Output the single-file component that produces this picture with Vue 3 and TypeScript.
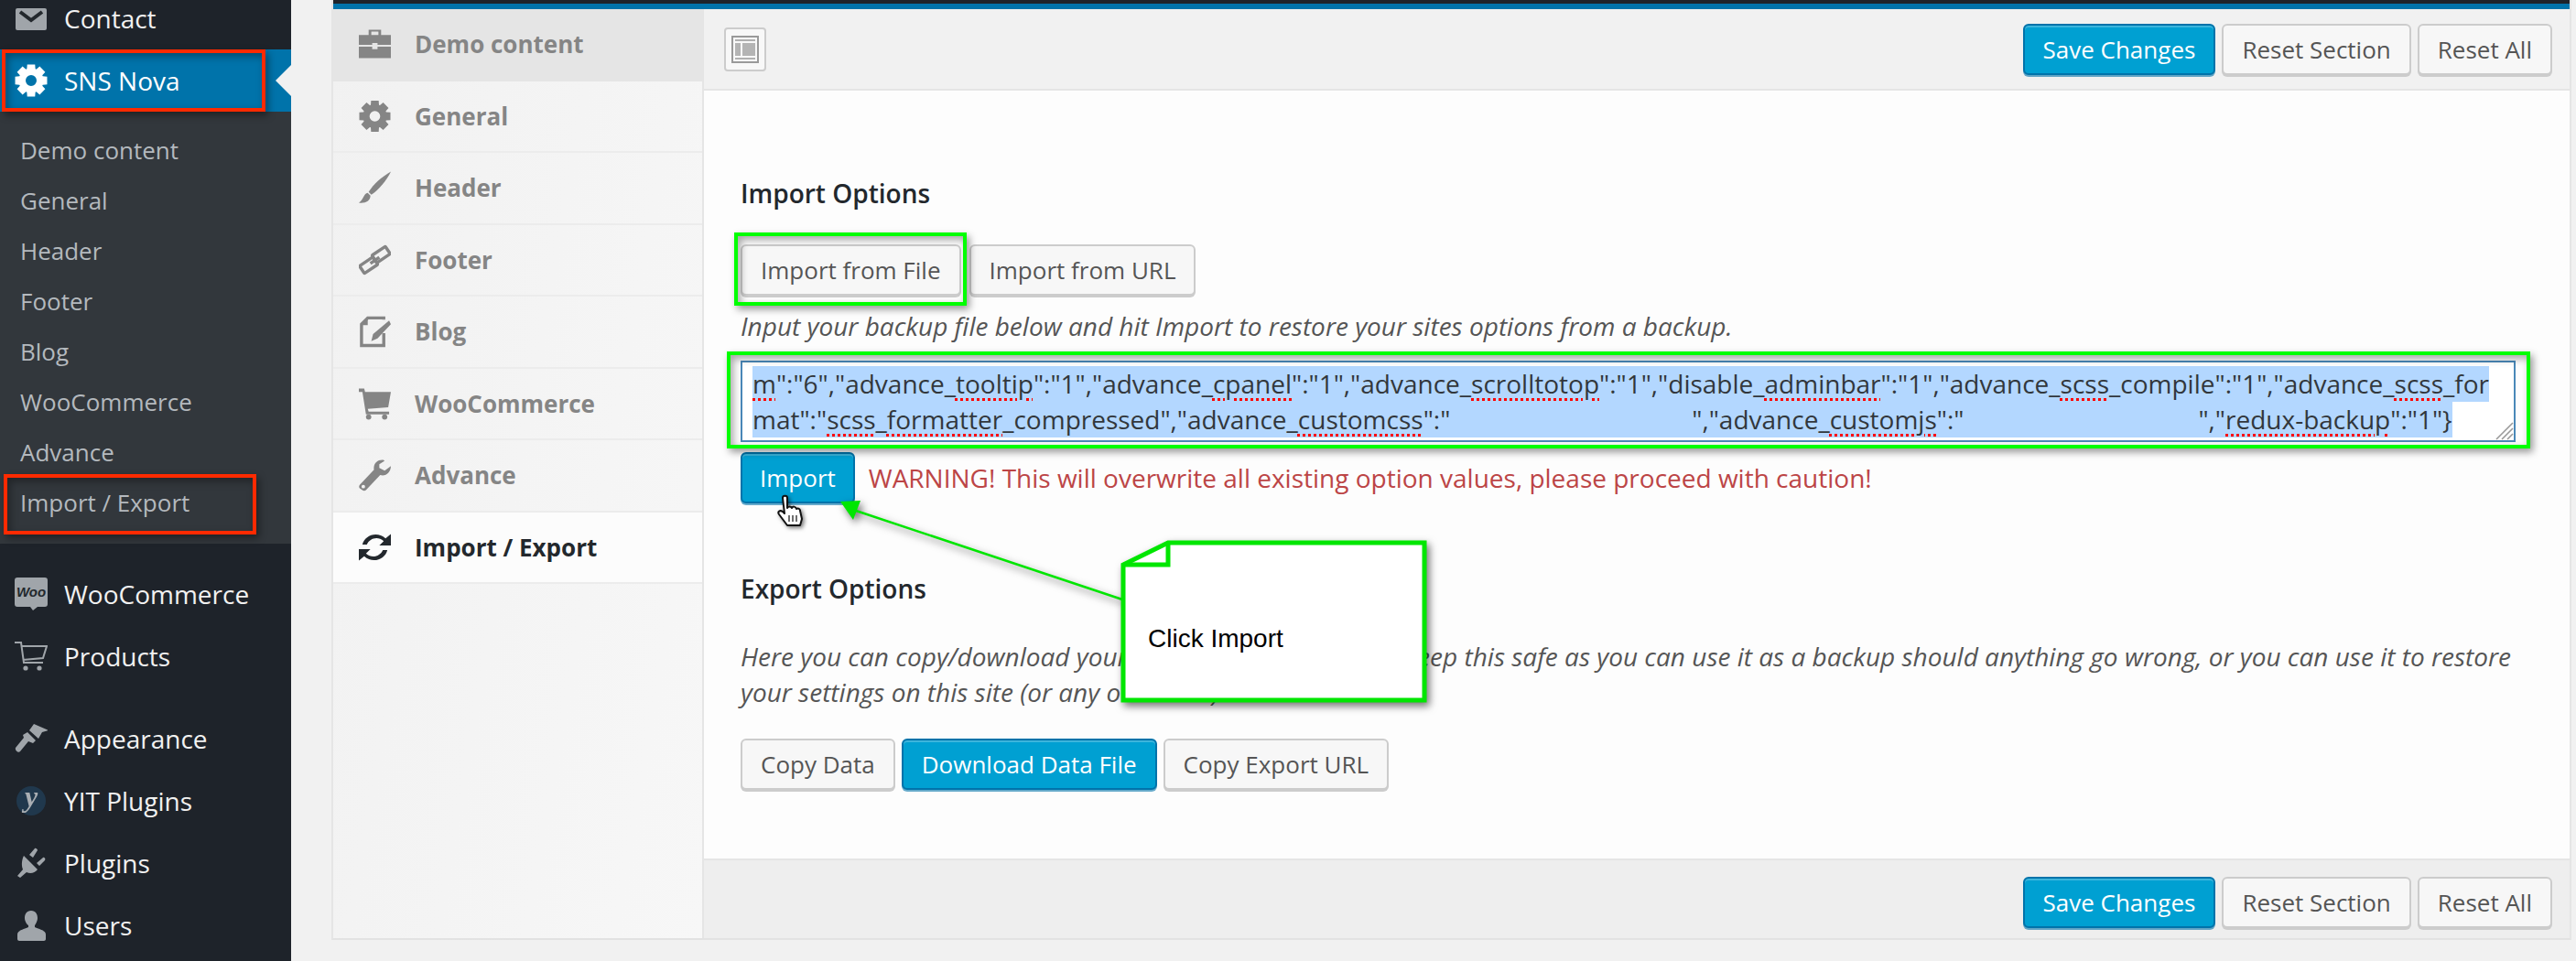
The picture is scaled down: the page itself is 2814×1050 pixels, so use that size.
<script setup lang="ts">
function gear(cx: number, cy: number, ro: number, ri: number, hole: number): string {
  let d = ''
  const n = 8
  for (let i = 0; i < n; i++) {
    const a = (i * 2 * Math.PI) / n
    const w = 0.24
    const pts = [
      [ri, a - 0.35],
      [ro, a - w],
      [ro, a + w],
      [ri, a + 0.35],
    ]
    for (const [r, t] of pts) {
      d += (d ? 'L' : 'M') + (cx + r * Math.cos(t)).toFixed(2) + ' ' + (cy + r * Math.sin(t)).toFixed(2)
    }
  }
  d += `ZM${cx - hole} ${cy}a${hole} ${hole} 0 1 0 ${hole * 2} 0a${hole} ${hole} 0 1 0 ${-hole * 2} 0Z`
  return d
}

const gearPath = gear(18, 18, 18, 13.5, 6)

const subItems: string[] = ['Demo content', 'General', 'Header', 'Footer', 'Blog', 'WooCommerce', 'Advance', 'Import / Export']

interface NavItem { label: string; icon: string }
const navItems: NavItem[] = [
  { label: 'Demo content', icon: 'brief' },
  { label: 'General', icon: 'gear' },
  { label: 'Header', icon: 'brush' },
  { label: 'Footer', icon: 'link' },
  { label: 'Blog', icon: 'edit' },
  { label: 'WooCommerce', icon: 'cart' },
  { label: 'Advance', icon: 'wrench' },
  { label: 'Import / Export', icon: 'refresh' },
]
</script>

<template>
  <div class="page">
    <aside class="side">
      <div class="row first">
        <svg class="ic" viewBox="0 0 36 36"><path fill="#a0a5aa" d="M3 7h30a2 2 0 0 1 2 2v20a2 2 0 0 1-2 2H3a2 2 0 0 1-2-2V9a2 2 0 0 1 2-2z" /><path fill="none" stroke="#23282d" stroke-width="4" d="M6 11l12 9 12-9" /></svg>
        <span>Contact</span>
      </div>
      <div class="row current">
        <svg class="ic" viewBox="0 0 36 36"><path fill="#fff" fill-rule="evenodd" :d="gearPath" /></svg>
        <span>SNS Nova</span>
        <i class="notch"></i>
      </div>
      <div class="sub">
        <div v-for="s in subItems" :key="s" class="subitem">{{ s }}</div>
      </div>
      <div class="row woo">
        <svg class="ic" viewBox="0 0 36 36"><path fill="#a0a5aa" d="M3 0h30a3 3 0 0 1 3 3v26a3 3 0 0 1-3 3H25l-5 4-3-4H3a3 3 0 0 1-3-3V3a3 3 0 0 1 3-3z" /><text x="18" y="21" text-anchor="middle" class="wootext">Woo</text></svg>
        <span>WooCommerce</span>
      </div>
      <div class="row">
        <svg class="ic" viewBox="0 0 36 36"><path fill="none" stroke="#a0a5aa" stroke-width="2" d="M0 3h7l3 22h21M8 7h27l-4 13-22 2" /><circle cx="12" cy="31" r="2.6" fill="#a0a5aa" /><circle cx="27" cy="31" r="2.6" fill="#a0a5aa" /></svg>
        <span>Products</span>
      </div>
      <div class="row gapped">
        <svg class="ic" viewBox="0 0 36 36"><path fill="#a0a5aa" d="M21 2l16 7-7 2-4 7-10-9zM14 11l9 9-3 3-5-2L6 32c-2 2-6-1-5-4l9-11-1-3z" /></svg>
        <span>Appearance</span>
      </div>
      <div class="row">
        <svg class="ic yit" viewBox="0 0 36 36"><circle cx="18" cy="18" r="16" fill="#20384d" /><text x="18" y="24" text-anchor="middle" class="ytext">y</text></svg>
        <span>YIT Plugins</span>
      </div>
      <div class="row">
        <svg class="ic" viewBox="0 0 36 36"><path fill="#a0a5aa" d="M10 10l15 15c-3 4-8 5-12 3l-7 6-3-2 6-7c-2-5-1-11 1-15zM16 9l6-7c1-1 3 1 3 2l-5 8zM24 18l7-6c2-1 3 2 2 3l-6 6z" /></svg>
        <span>Plugins</span>
      </div>
      <div class="row">
        <svg class="ic" viewBox="0 0 36 36"><path fill="#a0a5aa" d="M18 2c5 0 7 4 7 8 0 3-2 7-3 8v2c3 2 12 3 12 8v5c0 1-1 2-2 2H5c-1 0-2-1-2-2v-5c0-5 9-6 12-8v-2c-2-1-4-5-4-8 0-4 2-8 7-8z" /></svg>
        <span>Users</span>
      </div>
    </aside>

    <section class="panel">
      <div class="stripe"></div>
      <div class="body">
        <nav class="tabs">
          <div v-for="n in navItems" :key="n.label" class="tab" :class="{ first: n.icon === 'brief', active: n.icon === 'refresh' }">
            <svg class="tabic" viewBox="0 0 36 36">
              <g v-if="n.icon === 'brief'" fill="currentColor"><path fill-rule="evenodd" d="M11 2h14v6h11v11H21v-2h-6v2H0V8h11zM14 4v4h8V4z" /><path d="M0 21h15v3h6v-3h15v13H0z" /></g>
              <path v-else-if="n.icon === 'gear'" fill="currentColor" fill-rule="evenodd" :d="gearPath" />
              <g v-else-if="n.icon === 'brush'" fill="currentColor"><path d="M36 0C26 6 16 14 11 23l3 3C23 20 31 10 36 0z" /><path d="M10 24c-5 1-4 7-10 11 7 1 13-2 13-8z" /></g>
              <g v-else-if="n.icon === 'link'" fill="none" stroke="currentColor" stroke-width="3.5"><rect x="2" y="19" width="18" height="10" rx="1" transform="rotate(-34 11 24)" /><rect x="16" y="7" width="18" height="10" rx="1" transform="rotate(-34 25 12)" /><path d="M13 22l10-7" /></g>
              <g v-else-if="n.icon === 'edit'" fill="currentColor"><path fill="none" stroke="currentColor" stroke-width="3.5" d="M28 20v14H3V10l7-7h18v2" /><path d="M10 3v8H3zM34 6l2 4-15 16-7 3 2-8z" /></g>
              <g v-else-if="n.icon === 'cart'" fill="currentColor"><path d="M0 1h6l1 4h29l-3 17-23 2 1 3h23v3H8L4 5H0z" /><circle cx="11" cy="33" r="3" /><circle cx="29" cy="33" r="3" /></g>
              <path v-else-if="n.icon === 'wrench'" fill="currentColor" fill-rule="evenodd" d="M26 1c-6 0-10 5-9 11L1 29c-1 1-1 3 0 4l3 2c1 1 3 1 4 0l16-17c6 2 12-3 12-10l-7 5-6-3V6l6-4c-1-1-2-1-3-1zM5 29a2 2 0 1 0 0 4 2 2 0 0 0 0-4z" />
              <g v-else fill="currentColor"><path d="M4 15C6 5 20-1 30 8l6-5v13H23l5-5C21 5 12 8 9 15zM32 21C30 31 16 37 6 28l-6 5V20h13l-5 5c7 6 16 3 19-4z" /></g>
            </svg>
            <span>{{ n.label }}</span>
          </div>
        </nav>

        <main class="main">
          <header class="bar top">
            <div class="layout">
              <svg viewBox="0 0 30 30" class="layicon">
                <rect x="1" y="1" width="28" height="28" fill="none" stroke="#9a9a9a" stroke-width="2" />
                <path stroke="#b0b0b0" stroke-width="2" d="M4 5h22M4 25h22" />
                <path fill="#b4b4b4" d="M4 8h6v14H4zM12 8h14v14H12z" />
              </svg>
            </div>
            <div class="actions">
              <button class="btn primary">Save Changes</button>
              <button class="btn">Reset Section</button>
              <button class="btn">Reset All</button>
            </div>
          </header>

          <div class="content">
            <h3 class="title imp">Import Options</h3>
            <div class="btns b1">
              <button class="btn">Import from File</button>
              <button class="btn">Import from URL</button>
            </div>
            <p class="desc d1">Input your backup file below and hit Import to restore your sites options from a backup.</p>
            <div class="area">
              <div class="line"><span class="sel"><u>m</u>":"6","advance_<u>tooltip</u>":"1","advance_<u>cpanel</u>":"1","advance_<u>scrolltotop</u>":"1","disable_<u>adminbar</u>":"1","advance_<u>scss</u>_compile":"1","advance_<u>scss</u>_for</span></div>
              <div class="line"><span class="sel">mat":"<u>scss</u>_<u>formatter</u>_compressed","advance_<u>customcss</u>":"<i class="g1"></i>","advance_<u>customjs</u>":"<i class="g2"></i>","<u>redux-backup</u>":"1"}</span></div>
              <svg class="grip" viewBox="0 0 20 20"><path stroke="#999" stroke-width="1.6" d="M1 19L19 1M7 19L19 7M13 19l6-6" /></svg>
            </div>
            <div class="imprun">
              <button class="btn primary small">Import</button>
              <span class="warn">WARNING! This will overwrite all existing option values, please proceed with caution!</span>
            </div>
            <h3 class="title exp">Export Options</h3>
            <p class="desc d2">Here you can copy/download your current option settings. Keep this safe as you can use it as a backup should anything go wrong, or you can use it to restore your settings on this site (or any other site).</p>
            <div class="btns b2">
              <button class="btn">Copy Data</button>
              <button class="btn primary">Download Data File</button>
              <button class="btn">Copy Export URL</button>
            </div>
          </div>

          <footer class="bar bottom">
            <div class="actions">
              <button class="btn primary">Save Changes</button>
              <button class="btn">Reset Section</button>
              <button class="btn">Reset All</button>
            </div>
          </footer>
        </main>
      </div>
    </section>

    <div class="mark red r1"></div>
    <div class="mark red r2"></div>
    <div class="mark green g-file"></div>
    <div class="mark green g-area"></div>

    <svg class="annot" viewBox="0 0 2814 1050">
      <g class="shadowed">
        <polyline points="1226,655 932,557" fill="none" stroke="#00e600" stroke-width="2.5" />
        <polygon points="918,548 940,547 932,568" fill="#00e600" />
      </g>
      <g class="shadowed">
        <polygon points="1276,593 1556,593 1556,765 1227,765 1227,617" fill="#fff" stroke="#00e600" stroke-width="5" />
        <polyline points="1276,593 1276,617 1227,617" fill="none" stroke="#00e600" stroke-width="5" />
      </g>
      <text x="1254" y="707" class="note">Click Import</text>
      <g class="cursor" transform="translate(849 541)">
        <path fill="#fff" stroke="#111" stroke-width="2" stroke-linejoin="round" d="M6 3c0-3 5-3 5 0v11c1-2 4-2 5 0 1-2 4-2 5 1 2-1 4 0 4 2l2 9-2 7H11L2 21c-2-3 1-5 4-3l2 2z" />
        <path stroke="#333" stroke-width="1.4" d="M13 22v7M17 22v7M21 22v7" />
      </g>
    </svg>
  </div>
</template>

<style scoped>
.page {
  position: relative;
  display: flex;
  width: 2814px;
  height: 1050px;
  overflow: hidden;
  background: #f1f1f1;
  font-family: "Open Sans", "Liberation Sans", sans-serif;
  font-size: 28px;
  color: #444;
}
.side {
  flex: none;
  width: 318px;
  background: #1e232a;
  color: #f1f1f1;
}
.row {
  position: relative;
  display: flex;
  align-items: center;
  height: 68px;
  padding-left: 16px;
  box-sizing: border-box;
}
.row .ic {
  flex: none;
  width: 36px;
  height: 36px;
  margin-right: 18px;
}
.row.first {
  height: 54px;
  padding-bottom: 14px;
}
.row.current {
  background: #0073aa;
  color: #fff;
}
.notch {
  position: absolute;
  right: 0;
  top: 17px;
  border: 17px solid transparent;
  border-right-color: #f1f1f1;
  border-left-width: 0;
}
.sub {
  background: #32373c;
  padding: 15px 0 17px;
  color: #b4b9be;
  font-size: 26px;
}
.subitem {
  height: 55px;
  line-height: 55px;
  padding-left: 22px;
}
.row.woo {
  margin-top: 21px;
}
.row.gapped {
  margin-top: 22px;
}
.wootext {
  font-family: "Liberation Sans", sans-serif;
  font-size: 15px;
  font-weight: 700;
  font-style: italic;
  fill: #23282d;
}
.ytext {
  font-family: "Liberation Serif", serif;
  font-size: 32px;
  font-weight: 700;
  font-style: italic;
  fill: #a9aeb3;
}
.yit {
  overflow: visible;
  filter: blur(0.6px);
}

.panel {
  flex: none;
  display: flex;
  flex-direction: column;
  width: 2447px;
  height: 1027px;
  margin-left: 44px;
  box-sizing: border-box;
  background: #f4f4f4;
  border-left: 2px solid #e5e5e5;
  border-right: 2px solid #e5e5e5;
  border-bottom: 2px solid #e2e2e2;
}
.stripe {
  flex: none;
  height: 10px;
  box-sizing: border-box;
  background: #0073aa;
  border-top: 4px solid #1e232a;
}
.body {
  flex: 1;
  display: flex;
  min-height: 0;
}
.tabs {
  flex: none;
  width: 403px;
  background: linear-gradient(100deg, #f1f1f1, #f7f7f7);
  border-right: 2px solid #e5e5e5;
  font-size: 26px;
}
.tab {
  display: flex;
  align-items: center;
  height: 78.5px;
  box-sizing: border-box;
  padding-left: 28px;
  border-bottom: 2px solid #ececec;
  font-weight: 700;
  color: #858585;
}
.tab.first {
  background: #e5e5e5;
  border-bottom-color: #e5e5e5;
}
.tab.active {
  background: #fcfcfc;
  color: #23282d;
}
.tabic {
  flex: none;
  width: 35px;
  height: 36px;
  margin-right: 26px;
}
.main {
  flex: 1;
  display: flex;
  flex-direction: column;
  min-width: 0;
  background: #fdfdfd;
}
.bar {
  flex: none;
  display: flex;
  align-items: center;
  box-sizing: border-box;
  background: #f1f1f1;
}
.bar.top {
  height: 89px;
  padding: 16px 19px 0 22px;
  align-items: flex-start;
  border-bottom: 2px solid #e5e5e5;
}
.bar.bottom {
  margin-top: auto;
  height: 87px;
  padding: 18px 19px 0 22px;
  align-items: flex-start;
  border-top: 2px solid #e5e5e5;
  background: #eee;
}
.actions {
  display: flex;
  gap: 7px;
  margin-left: auto;
}
.layout {
  display: flex;
  align-items: center;
  justify-content: center;
  width: 46px;
  height: 48px;
  margin-top: 4px;
  box-sizing: border-box;
  border: 2px solid #ccc;
  border-radius: 4px;
  background: #f8f8f8;
}
.layicon {
  width: 30px;
  height: 30px;
}
.btn {
  flex: none;
  height: 56px;
  box-sizing: border-box;
  padding: 0 20px;
  font-family: inherit;
  font-size: 26px;
  color: #555;
  background: #f7f7f7;
  border: 2px solid #ccc;
  border-radius: 6px;
  box-shadow: 0 2px 0 #ccc;
  margin: 0;
  white-space: nowrap;
}
.btn.primary {
  color: #fff;
  background: #00a0d2;
  border-color: #0073aa;
  box-shadow: inset 0 2px 0 rgba(120, 200, 230, 0.5), 0 2px 0 rgba(0, 115, 170, 0.6);
}
.btn.small {
  padding: 0 19px;
}
.content {
  padding-left: 40px;
}
.title {
  margin: 0;
  font-size: 28px;
  line-height: 36px;
  font-weight: 600;
  color: #23282d;
}
.imp {
  margin-top: 94px;
}
.exp {
  margin-top: 75px;
}
.btns {
  display: flex;
}
.b1 {
  margin-top: 38px;
  gap: 9px;
}
.b2 {
  margin-top: 31px;
  gap: 7px;
}
.desc {
  margin: 0;
  font-style: italic;
  line-height: 39px;
  color: #555;
}
.d1 {
  margin-top: 14px;
}
.d2 {
  margin-top: 37px;
  width: 1960px;
}
.area {
  position: relative;
  width: 1939px;
  height: 89px;
  margin-top: 18px;
  box-sizing: border-box;
  background: #fff;
  border: 2px solid #4a88b8;
  padding: 4px 0 0 11px;
  color: #32373c;
  overflow: hidden;
}
.line {
  height: 39px;
  line-height: 39px;
  white-space: nowrap;
}
.sel {
  display: inline-block;
  background: #b3d7ff;
}
.sel u {
  text-decoration: underline dotted #f00 3px;
  text-underline-offset: 5px;
}
.g1 {
  display: inline-block;
  width: 264px;
}
.g2 {
  display: inline-block;
  width: 256px;
}
.grip {
  position: absolute;
  right: 0;
  bottom: 0;
  width: 20px;
  height: 20px;
}
.imprun {
  display: flex;
  align-items: center;
  margin-top: 11px;
}
.warn {
  margin-left: 15px;
  color: #bc4546;
}
.mark {
  position: absolute;
  box-sizing: border-box;
  pointer-events: none;
  box-shadow: 3px 4px 8px rgba(0, 0, 0, 0.4), inset 3px 4px 8px rgba(0, 0, 0, 0.35);
}
.red {
  border: 4px solid #ff2a00;
}
.green {
  border: 4px solid #00ff00;
}
.r1 {
  left: 2px;
  top: 54px;
  width: 288px;
  height: 68px;
}
.r2 {
  left: 4px;
  top: 518px;
  width: 276px;
  height: 66px;
}
.g-file {
  left: 802px;
  top: 254px;
  width: 254px;
  height: 80px;
}
.g-area {
  left: 794px;
  top: 384px;
  width: 1970px;
  height: 106px;
}
.annot {
  position: absolute;
  left: 0;
  top: 0;
  width: 2814px;
  height: 1050px;
  pointer-events: none;
}
.shadowed {
  filter: drop-shadow(3px 4px 4px rgba(0, 0, 0, 0.55));
}
.cursor {
  filter: drop-shadow(2px 2px 2px rgba(0, 0, 0, 0.5));
}
.note {
  font-family: "Liberation Sans", Arial, sans-serif;
  font-size: 28px;
  fill: #000;
}
</style>

<style>
html,
body {
  margin: 0;
  background: #f1f1f1;
  overflow: hidden;
}
</style>
